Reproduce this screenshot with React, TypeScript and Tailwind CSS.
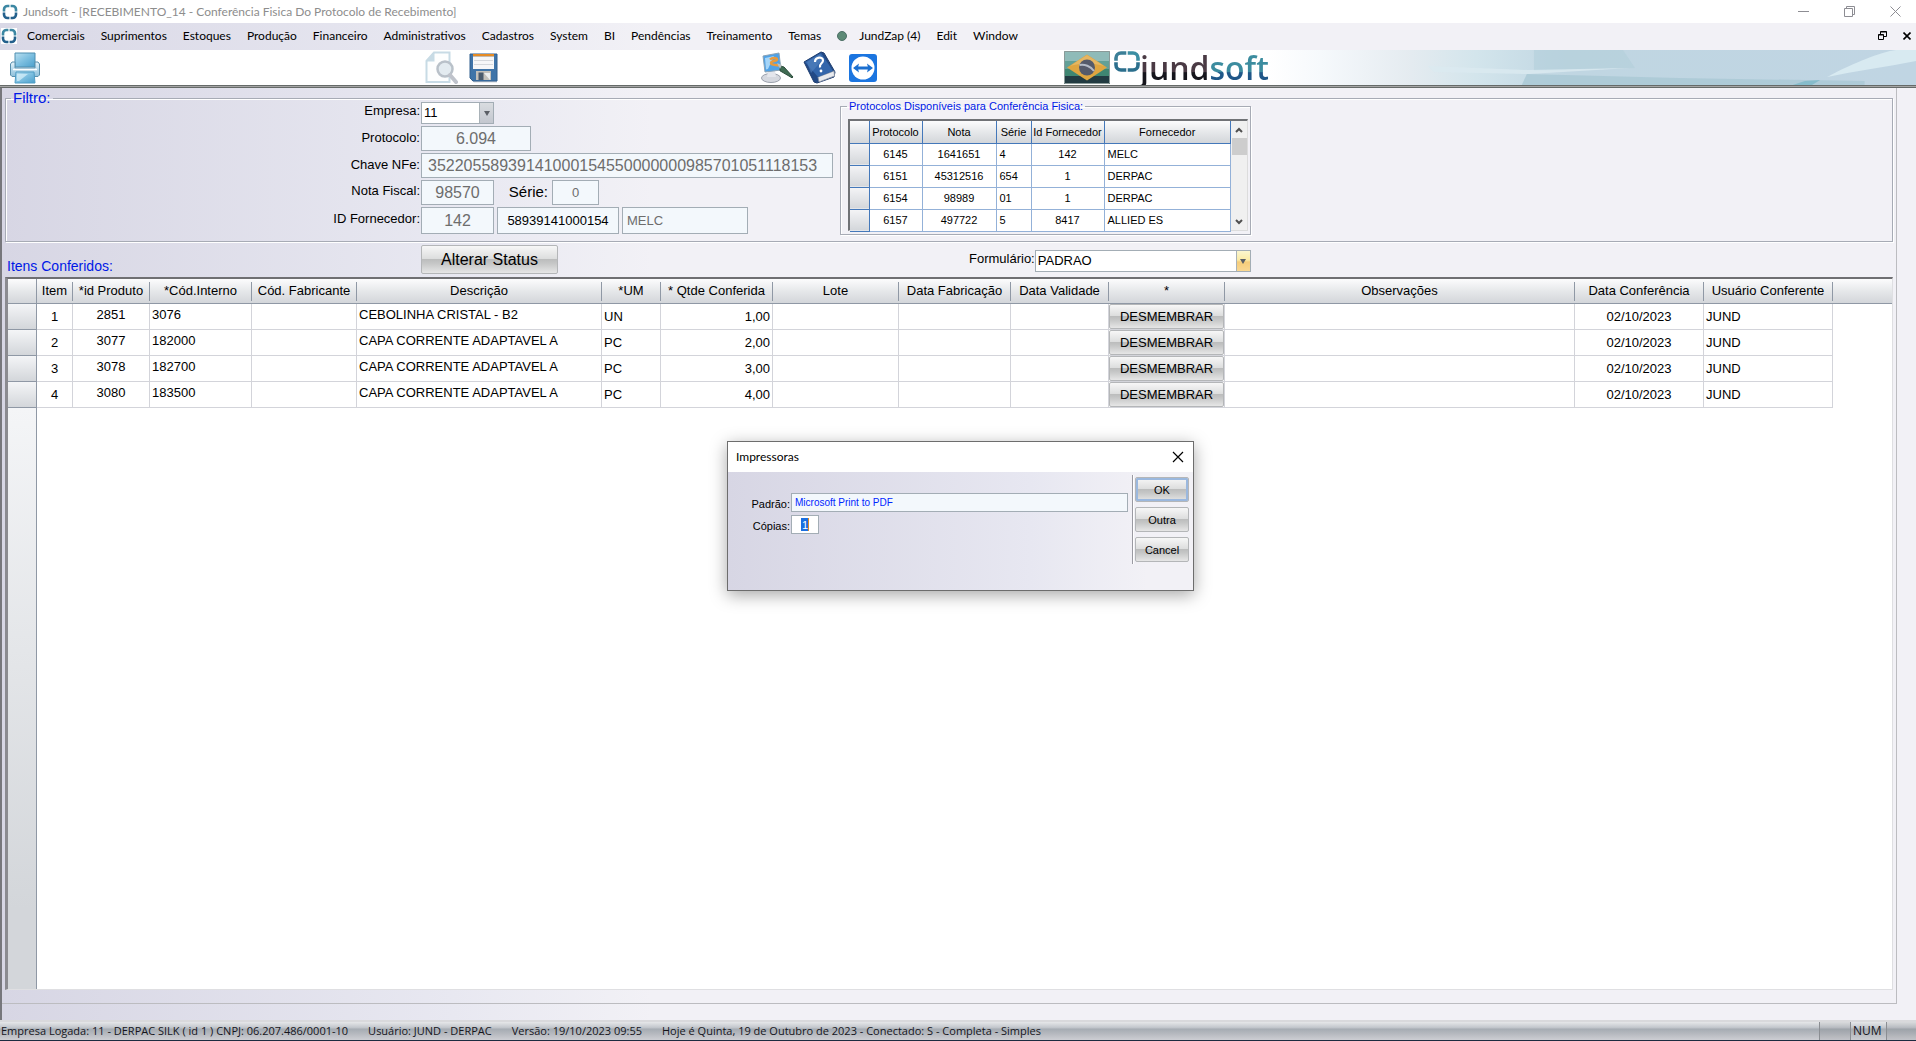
import { useState } from "react";

const menus = [
  "Comerciais",
  "Suprimentos",
  "Estoques",
  "Produção",
  "Financeiro",
  "Administrativos",
  "Cadastros",
  "System",
  "BI",
  "Pendências",
  "Treinamento",
  "Temas",
];

const protocolos = [
  ["6145", "1641651", "4", "142", "MELC"],
  ["6151", "45312516", "654", "1", "DERPAC"],
  ["6154", "98989", "01", "1", "DERPAC"],
  ["6157", "497722", "5", "8417", "ALLIED ES"],
];

const itens = [
  { item: 1, id: "2851", cod: "3076", desc: "CEBOLINHA CRISTAL - B2", um: "UN", qtde: "1,00" },
  { item: 2, id: "3077", cod: "182000", desc: "CAPA CORRENTE ADAPTAVEL A", um: "PC", qtde: "2,00" },
  { item: 3, id: "3078", cod: "182700", desc: "CAPA CORRENTE ADAPTAVEL A", um: "PC", qtde: "3,00" },
  { item: 4, id: "3080", cod: "183500", desc: "CAPA CORRENTE ADAPTAVEL A", um: "PC", qtde: "4,00" },
];

const colunas = [
  { nome: "Item", w: "w-[36px]" },
  { nome: "*id Produto", w: "w-[77px]" },
  { nome: "*Cód.Interno", w: "w-[102px]" },
  { nome: "Cód. Fabricante", w: "w-[105px]" },
  { nome: "Descrição", w: "w-[245px]" },
  { nome: "*UM", w: "w-[59px]" },
  { nome: "* Qtde Conferida", w: "w-[112px]" },
  { nome: "Lote", w: "w-[126px]" },
  { nome: "Data Fabricação", w: "w-[112px]" },
  { nome: "Data Validade", w: "w-[98px]" },
  { nome: "*", w: "w-[116px]" },
  { nome: "Observações", w: "w-[350px]" },
  { nome: "Data Conferência", w: "w-[129px]" },
  { nome: "Usuário Conferente", w: "w-[129px]" },
];

const chrome = "font-['Lato','Noto_Sans',sans-serif]";
const field = "border border-[#a3adb5] bg-[#f3f8fc] outline-none text-[#6d6d6d]";
const metal =
  "border border-[#b4b6b8] rounded-xs bg-[linear-gradient(to_bottom,#f7f7f7_0%,#dcdddd_48%,#bcbdbd_50%,#c6c7c7_65%,#e6e6e6_100%)] text-black";
const headerBg = "bg-[linear-gradient(to_bottom,#fcfcfd,#e6e8ea_50%,#d3d6da)]";
const cell = "border-r border-b border-[#d3d4da]";

const AppMark = () => (
  <svg width="16" height="16" viewBox="0 0 16 16" fill="none" strokeWidth="2.6">
    <path d="M2 7.400V5.500A3.500 3.500 0 0 1 5.500 2h1.900M8.600 2h1.900A3.500 3.500 0 0 1 14 5.500v1.900" stroke="#3c87a3" />
    <path d="M14 8.600v1.900a3.500 3.500 0 0 1-3.500 3.500H8.600M7.400 14H5.500A3.500 3.500 0 0 1 2 10.500V8.600" stroke="#23608c" />
  </svg>
);

const PrinterIcon = () => (
  <svg width="30" height="32" viewBox="0 0 30 32">
    <defs>
      <linearGradient id="paper" x1="0" y1="0" x2="1" y2="1">
        <stop offset="0" stopColor="#b9dff0" />
        <stop offset="0.5" stopColor="#7dbfe0" />
        <stop offset="1" stopColor="#4b9fcb" />
      </linearGradient>
      <linearGradient id="body" x1="0" y1="0" x2="0" y2="1">
        <stop offset="0" stopColor="#e8f4fa" />
        <stop offset="0.5" stopColor="#b5d9ec" />
        <stop offset="1" stopColor="#8fbfd9" />
      </linearGradient>
    </defs>
    <path d="M5 1h20v14H5z" fill="url(#paper)" stroke="#4f8eb0" />
    <path d="M2 10h3v6h20v-6h3l1.5 2v11l-1.500 1.500H2L.5 23V12z" fill="url(#body)" stroke="#5a90ad" />
    <path d="M3 17.500h24" stroke="#fff" strokeWidth="1.500" />
    <path d="M6 20h18l1 11H5z" fill="url(#paper)" stroke="#4f9cc4" />
    <path d="M7 22h11l-9 7H7z" fill="#d9f1fb" opacity=".7" />
  </svg>
);

const PreviewIcon = () => (
  <svg width="33" height="33" viewBox="0 0 33 33" fill="none">
    <path d="M9 1.500h15.500V31H1.500V10z" fill="#fdfefe" stroke="#c8dbe5" strokeWidth="2" />
    <path d="M1 10.500 9.500 1v9.500z" fill="#c8dbe5" />
    <circle cx="20" cy="18" r="7.500" fill="#e3ebf0" stroke="#b9c1c9" strokeWidth="2.500" />
    <path d="m25 24 6 7" stroke="#bfc3cb" strokeWidth="4" strokeLinecap="round" />
  </svg>
);

const SaveIcon = () => (
  <svg width="29" height="32" viewBox="0 0 29 32">
    <path d="M2 28h26v2.500H5z" fill="#d5d8dc" />
    <path d="M1 2h27v27H4l-3-3z" fill="#3f74a8" stroke="#315f8e" />
    <path d="M4 2h21v2.500H4z" fill="#e58b24" />
    <path d="M4 4.500h21V17H4z" fill="#f6f7f8" />
    <path d="M5 8.500h19M5 12.500h19" stroke="#d5d8dc" />
    <path d="M7 19h15v9H7z" fill="#c3c0ba" />
    <path d="M9.500 20.500h5V28h-5z" fill="#4a5a6c" />
    <path d="m15 21 6 0v7z" fill="#eceeef" />
  </svg>
);

const ThemeIcon = () => (
  <svg width="33" height="31" viewBox="0 0 33 31">
    <ellipse cx="10" cy="26" rx="9.500" ry="4.500" fill="#d5d8df" stroke="#9aa0ab" />
    <path d="M7 19h7l1 6H6z" fill="#e4e6ec" />
    <path d="m2 4 16-3 2 17-16 2z" fill="#4fa1e6" stroke="#8aa2b5" />
    <path d="m4 6 9-2-6 13-2 .5z" fill="#a5d5f8" />
    <path d="M9 7.500c2-2 7-2 7 0s-6 1-6 3.500 5 1.500 8 2.500" fill="none" stroke="#e99a3c" strokeWidth="2.400" />
    <path d="m19 14 4 1 9 10-1 .8-12-7z" fill="#3f6b52" stroke="#294a39" />
    <path d="m16 11 5 2-2 4z" fill="#b9c1c4" />
  </svg>
);

const HelpIcon = () => (
  <svg width="33" height="33" viewBox="0 0 33 33">
    <path d="m1 11 17-10 3 1 11 19-1 5-17 6-3-1z" fill="#234a86" stroke="#1d3d70" />
    <path d="m15 26 16-6 .5 5L16 31z" fill="#e8eaee" stroke="#8c94a3" strokeWidth=".8" />
    <path d="m2 11 16-9 12 18-15 6z" fill="#3366ab" />
    <path d="m4 11 13-8 3 5L8 22z" fill="#5583c0" opacity=".6" />
    <path d="M12 11c0-5 8-6 8-1.500 0 3-4 3-3 7" fill="none" stroke="#fff" strokeWidth="2.200" />
    <circle cx="18" cy="20" r="1.400" fill="#fff" />
  </svg>
);

const RemoteIcon = () => (
  <svg width="28" height="28" viewBox="0 0 28 28">
    <rect width="28" height="28" rx="3" fill="#1b75e0" />
    <circle cx="14" cy="14" r="11.500" fill="#fff" />
    <path d="m4 14 6-4.500-.8 3h9.600l-.8-3 6 4.500-6 4.500.8-3H9.200l.8 3z" fill="#1b6fd0" />
  </svg>
);

const FlagIcon = () => (
  <svg width="46" height="33" viewBox="0 0 46 33">
    <rect width="46" height="33" fill="#3f8672" />
    <path d="M0 0h46v10H0z" fill="#8fbbb8" />
    <path d="M0 10h46v8H0z" fill="#62a097" />
    <path d="M0 25h46v8H0z" fill="#223b42" />
    <path d="m3 16.500 20-13 20 13-20 13z" fill="#dfa540" />
    <path d="m6 15 17-11 17 11c-10-3-24-3-34 0z" fill="#e8bd70" opacity=".7" />
    <circle cx="23" cy="16.500" r="8" fill="#555a6a" />
    <path d="M15.500 14c5-1 11 1 14.500 6" fill="none" stroke="#b4bac6" strokeWidth="2" />
    <path d="M.5.5h45v32H.5z" fill="none" stroke="#8a9a98" />
  </svg>
);

const BrandMark = () => (
  <svg width="26" height="21" viewBox="0 0 26 21" fill="none" strokeWidth="3.600">
    <path d="M2 9.800V7A5 5 0 0 1 7 2h5.300" stroke="#3b7f97" />
    <path d="M13.700 2H19a5 5 0 0 1 5 5v2.800" stroke="#3b8fa3" />
    <path d="M24 11.200V14a5 5 0 0 1-5 5h-5.300M12.300 19H7a5 5 0 0 1-5-5v-2.800" stroke="#2b6f8d" />
  </svg>
);

const Banner = () => (
  <svg className="h-full flex-1" viewBox="0 0 640 35" preserveAspectRatio="none">
    <defs>
      <linearGradient id="sky">
        <stop offset="0" stopColor="#fff" />
        <stop offset="0.08" stopColor="#f6f9fc" />
        <stop offset="0.22" stopColor="#e4ebf0" />
        <stop offset="0.32" stopColor="#d3e5ec" />
        <stop offset="0.46" stopColor="#c0d6e2" />
        <stop offset="1" stopColor="#c0d5e3" />
      </linearGradient>
    </defs>
    <path d="M0 0h640v35H0z" fill="url(#sky)" />
    <path d="M262 0h88l12 18-100 3z" fill="#b3cfdb" opacity=".6" />
    <path d="M157 16l100 4 100-2-100 6-94-2z" fill="#dbeaf0" opacity=".8" />
    <path d="M255 24l150 4 184 3v4H250z" fill="#a9c8d4" opacity=".8" />
    <path d="M552 27C580 12 605 2 620 0h20v11c-30 6-60 10-88 16z" fill="#d8eaf1" />
    <path d="m518 35 12-4 15-1-8 5z" fill="#86bccb" />
  </svg>
);

const Spin = ({ gold }: { gold?: boolean }) => (
  <span
    className={
      gold
        ? "pointer-events-none absolute inset-y-px right-px w-[14px] flex items-center justify-center border-l border-[#a9b2b8] bg-[linear-gradient(to_bottom,#fbf6cf,#fbeba6_45%,#f6cd7a_55%,#fad892)]"
        : "pointer-events-none absolute inset-y-px right-px w-[14px] flex items-center justify-center border-l border-[#a9b2b8] bg-[linear-gradient(to_bottom,#d9dce0,#c3c7cf)]"
    }
  >
    <svg width="6" height="5" viewBox="0 0 6 5">
      <path d="M0 0h6L3 5z" fill="#5b5f66" />
    </svg>
  </span>
);

const Filtro = () => (
  <fieldset className="mx-[3px] min-w-0 border border-[#a7abb5] shadow-[inset_1px_1px_0_#fff,1px_1px_0_#fff]">
    <legend className="ml-[5px] px-[2px] h-2 leading-2 text-[15px] text-[#0019e6]">Filtro:</legend>
    <div className="flex items-start gap-[7px] pb-[6px]">
      <div className="grid grid-cols-[415px_auto] gap-y-[2px]">
        <label htmlFor="empresa" className="pr-px text-right">Empresa:</label>
        <div className="relative w-[73px]">
          <select id="empresa" className="block appearance-none w-full h-[22px] border border-[#a3adb5] bg-white pl-[2px] outline-none">
            <option>11</option>
          </select>
          <Spin />
        </div>

        <label htmlFor="protocolo" className="pt-[3px] pr-px text-right">Protocolo:</label>
        <input id="protocolo" readOnly defaultValue="6.094" className={`${field} w-[110px] h-[25px] text-center text-base`} />

        <label htmlFor="chave" className="pt-[3px] pr-px text-right">Chave NFe:</label>
        <input id="chave" readOnly defaultValue="35220558939141000154550000000985701051118153" className={`${field} w-[412px] h-[25px] px-[6px] text-base`} />

        <label htmlFor="nota" className="pt-[2px] pr-px text-right">Nota Fiscal:</label>
        <div className="flex">
          <input id="nota" readOnly defaultValue="98570" className={`${field} w-[73px] h-[25px] text-center text-base`} />
          <label htmlFor="serie" className="w-[58px] pr-[4px] pt-[3px] text-right text-[15px]">Série:</label>
          <input id="serie" readOnly defaultValue="0" className={`${field} w-[47px] h-[25px] text-center`} />
        </div>

        <label htmlFor="fornecedor" className="pt-[3px] pr-px text-right">ID Fornecedor:</label>
        <div className="flex gap-[3px]">
          <input id="fornecedor" readOnly defaultValue="142" className={`${field} w-[73px] h-[27px] text-center text-base`} />
          <input aria-label="CNPJ" readOnly defaultValue="58939141000154" className="border border-[#a3adb5] bg-[#f3f8fc] outline-none w-[122px] h-[27px] text-center text-black" />
          <input aria-label="Nome do fornecedor" readOnly defaultValue="MELC" className={`${field} w-[126px] h-[27px] px-1`} />
        </div>
      </div>

      {/* Protocolos */}
      <fieldset className="w-[411px] border border-[#a7abb5] shadow-[inset_1px_1px_0_#fff,1px_1px_0_#fff] text-[11px]">
        <legend className="ml-[6px] px-[2px] h-2 leading-2 text-[#0019e6]">
          Protocolos Disponíveis para Conferência Fisica:
        </legend>
        <div className="flex ml-[7px] mr-[2px] mt-[9px] mb-[3px] h-[112px] border-t-2 border-l-2 border-[#707276] border-r border-b border-r-[#dcdcdc] border-b-[#dcdcdc]">
          <table className="flex-1 table-fixed border-collapse bg-white">
            <thead>
              <tr className={`h-[22px] ${headerBg}`}>
                <th className="w-[19px] border-r border-b border-[#4478ba]" />
                <th className="w-[53px] border-r border-b border-[#4478ba] p-0 font-normal">Protocolo</th>
                <th className="w-[74px] border-r border-b border-[#4478ba] p-0 font-normal">Nota</th>
                <th className="w-[35px] border-r border-b border-[#4478ba] p-0 font-normal">Série</th>
                <th className="w-[73px] border-r border-b border-[#4478ba] p-0 font-normal whitespace-nowrap">Id Fornecedor</th>
                <th className="border-r border-b border-[#4478ba] p-0 font-normal">Fornecedor</th>
              </tr>
            </thead>
            <tbody>
              {protocolos.map(([p, nota, serie, id, nome]) => (
                <tr key={p} className="h-[22px]">
                  <td className="border-r border-b border-[#4478ba] bg-[linear-gradient(to_bottom,#f4f4f6,#d3d6da)]" />
                  <td className="border-r border-b border-[#93b1d8] text-center">{p}</td>
                  <td className="border-r border-b border-[#93b1d8] text-center">{nota}</td>
                  <td className="border-r border-b border-[#93b1d8] pl-[3px]">{serie}</td>
                  <td className="border-r border-b border-[#93b1d8] text-center">{id}</td>
                  <td className="border-r border-b border-[#93b1d8] pl-[3px]">{nome}</td>
                </tr>
              ))}
            </tbody>
          </table>
          <div className="w-[16px] flex flex-col items-center bg-[#f0f0f0]">
            <svg width="8" height="17" viewBox="0 0 8 17" fill="none" stroke="#505050" strokeWidth="2">
              <path d="m1 11 3-3 3 3" />
            </svg>
            <div className="w-[15px] h-[17px] bg-[#cdcdcd]" />
            <svg width="8" height="17" viewBox="0 0 8 17" fill="none" stroke="#505050" strokeWidth="2" className="mt-auto">
              <path d="m1 7 3 3 3-3" />
            </svg>
          </div>
        </div>
      </fieldset>
    </div>
  </fieldset>
);

const Itens = () => (
  <div className="flex-1 flex flex-col mx-[3px] border-t-2 border-l-[3px] border-r border-b border-t-[#6f6f72] border-l-[#8b8b90] border-r-[#dfdfe2] border-b-[#dfdfe2] bg-white">
    <table className="w-full table-fixed border-separate border-spacing-0">
      <thead>
        <tr className="h-[25px]">
          <th className={`w-[29px] border-r border-b border-[#8f98a5] ${headerBg}`} />
          {colunas.map((c) => (
            <th key={c.nome} className={`${c.w} border-b border-[#8f98a5] p-0 font-normal whitespace-nowrap ${headerBg}`}>
              <div className="h-[19px] leading-[18px] border-r border-[#8f98a5]">{c.nome}</div>
            </th>
          ))}
          <th className={`border-b border-[#8f98a5] ${headerBg}`} />
        </tr>
      </thead>
      <tbody>
        {itens.map((i) => (
          <tr key={i.item} className="h-[26px]">
            <td className="border-r border-b border-[#8f98a5] bg-[linear-gradient(to_bottom,#f4f5f7,#d3d6da)]" />
            <td className={`${cell} p-0 text-center`}>{i.item}</td>
            <td className={`${cell} p-0 pb-[3px] text-center`}>{i.id}</td>
            <td className={`${cell} p-0 pl-[2px] pb-[3px]`}>{i.cod}</td>
            <td className={cell} />
            <td className={`${cell} p-0 pl-[2px] pb-[3px]`}>{i.desc}</td>
            <td className={`${cell} p-0 pl-[2px]`}>{i.um}</td>
            <td className={`${cell} p-0 pr-[2px] text-right`}>{i.qtde}</td>
            <td className={cell} />
            <td className={cell} />
            <td className={cell} />
            <td className={`${cell} p-0`}>
              <button type="button" className={`${metal} block w-full h-[25px] pt-px`}>DESMEMBRAR</button>
            </td>
            <td className={cell} />
            <td className={`${cell} p-0 text-center`}>02/10/2023</td>
            <td className={`${cell} p-0 pl-[2px]`}>JUND</td>
            <td />
          </tr>
        ))}
      </tbody>
    </table>
    <div className="flex-1 w-[29px] border-r border-[#8f98a5] bg-[linear-gradient(to_bottom,#f4f5f7,#d3d6da_500px)]" />
  </div>
);

const Impressoras = () => {
  const [copias, setCopias] = useState("1");
  return (
    <div
      role="dialog"
      aria-label="Impressoras"
      className="absolute left-[727px] top-[441px] w-[467px] h-[150px] flex flex-col border border-[#6d6d6d] bg-white shadow-[0_4px_16px_rgba(0,0,0,0.35)] text-[11px]"
    >
      <div className={`h-[30px] flex items-center justify-between pl-2 pr-[9px] text-[12px] ${chrome}`}>
        <span>Impressoras</span>
        <button type="button" aria-label="Fechar">
          <svg width="12" height="12" viewBox="0 0 12 12" stroke="#000" strokeWidth="1.200">
            <path d="m1 1 10 10M11 1 1 11" />
          </svg>
        </button>
      </div>
      <div className="flex-1 flex bg-[linear-gradient(to_right,#d7d6e4,#e7e7f1_65%,#f2f1f6_90%)]">
        <div className="flex-1 pt-[21px] pr-[4px] flex flex-col gap-[2px]">
          <div className="flex">
            <label htmlFor="padrao" className="w-[63px] pr-[1px] pt-[2px] text-right">Padrão:</label>
            <input id="padrao" readOnly defaultValue="Microsoft Print to PDF" className="flex-1 min-w-0 h-[19px] border border-[#a3adb5] bg-[#f3f8fc] px-[3px] text-[10px] text-[#0026ff] outline-none" />
          </div>
          <div className="flex">
            <label htmlFor="copias" className="w-[63px] pr-[1px] pt-[2px] text-right">Cópias:</label>
            <div className="relative w-[28px] h-[19px] border border-[#a3adb5] bg-white flex items-center justify-center">
              <span className="absolute w-[8px] h-[13px] bg-[#1b6fe0] border-r border-[#d98a2b]" />
              <input id="copias" value={copias} onChange={(e) => setCopias(e.target.value)} className="relative w-full text-center text-white bg-transparent outline-none" />
            </div>
          </div>
        </div>
        <div className="mt-[3px] w-[61px] h-[89px] border-l border-[#9a9aa2] shadow-[inset_1px_0_0_#fff] pt-[2px] pl-[2px] flex flex-col gap-[5px]">
          <button type="button" className={`${metal} w-[54px] h-[25px] shadow-[inset_0_0_0_2px_#9bb8de]`}>OK</button>
          <button type="button" className={`${metal} w-[54px] h-[25px]`}>Outra</button>
          <button type="button" className={`${metal} w-[54px] h-[25px]`}>Cancel</button>
        </div>
      </div>
    </div>
  );
};

const App = () => {
  return (
    <div className="relative min-h-screen flex flex-col bg-white text-[13px] leading-[18px] text-black font-['Liberation_Sans',Arial,sans-serif]">
      {/* Title bar */}
      <header className={`h-[23px] flex items-center pl-[2px] pr-[15px] text-[12px] text-[#8d8d8d] ${chrome}`}>
        <AppMark />
        <h1 className="ml-[5px]">Jundsoft - [RECEBIMENTO_14 - Conferência Fisica Do Protocolo de Recebimento]</h1>
        <div className="ml-auto flex gap-[35px]">
          <button type="button" aria-label="Minimizar">
            <svg width="11" height="11" viewBox="0 0 11 11" stroke="#8d8d93"><path d="M0 5.500h11" /></svg>
          </button>
          <button type="button" aria-label="Restaurar">
            <svg width="11" height="11" viewBox="0 0 11 11" fill="none" stroke="#8d8d93"><path d="M.5 2.500h8v8h-8zM2.500 2.500v-2h8v8h-2" /></svg>
          </button>
          <button type="button" aria-label="Fechar janela">
            <svg width="11" height="11" viewBox="0 0 11 11" stroke="#8d8d93"><path d="m.5.5 10 10M10.500.5l-10 10" /></svg>
          </button>
        </div>
      </header>

      {/* Menu */}
      <nav className={`h-[27px] flex items-center pb-[2px] pl-[1px] pr-[5px] text-[12px] bg-[linear-gradient(to_right,#d9d8e6,#e8e8f1_450px,#f2f1f6_650px)] ${chrome}`}>
        <span className="bg-white"><AppMark /></span>
        <div className="ml-[10px] flex items-center gap-4">
          {menus.map((m) => (
            <a key={m} href="#">{m}</a>
          ))}
          <a href="#" className="flex items-center gap-3">
            <span className="w-[10px] h-[10px] rounded-full bg-[#5d8a76] border border-[#4d6f66]" />
            JundZap (4)
          </a>
          <a href="#">Edit</a>
          <a href="#">Window</a>
        </div>
        <div className="ml-auto flex gap-4">
          <button type="button" aria-label="Restaurar documento">
            <svg width="9" height="9" viewBox="0 0 9 9" fill="none" stroke="#000"><path d="M.5 3.500h5v5h-5zM.5 4h5M2.500 3V.5h6v5H6M2.500 1h6" /></svg>
          </button>
          <button type="button" aria-label="Fechar documento">
            <svg width="8" height="8" viewBox="0 0 8 8" stroke="#000" strokeWidth="1.600"><path d="m.5.5 7 7M7.500.5l-7 7" /></svg>
          </button>
        </div>
      </nav>

      {/* Toolbar */}
      <div className="h-[35px] flex items-center pl-[10px]">
        <button type="button" aria-label="Imprimir"><PrinterIcon /></button>
        <button type="button" aria-label="Visualizar" className="ml-[385px]"><PreviewIcon /></button>
        <button type="button" aria-label="Salvar" className="ml-[11px]"><SaveIcon /></button>
        <button type="button" aria-label="Temas" className="ml-[263px]"><ThemeIcon /></button>
        <button type="button" aria-label="Ajuda" className="ml-[9px]"><HelpIcon /></button>
        <button type="button" aria-label="Acesso remoto" className="ml-[13px]"><RemoteIcon /></button>
        <div className="ml-[187px] flex">
          <FlagIcon />
          <span className="ml-1"><BrandMark /></span>
          <span className="leading-[34px] text-[32px] font-semibold font-['Open_Sans',sans-serif]">
            <span className="bg-[linear-gradient(to_bottom,#4a3a44_60%,#15151c_62%)] bg-clip-text text-transparent">jund</span>
            <span className="bg-[linear-gradient(to_bottom,#3c8c9f_60%,#1f5788_62%)] bg-clip-text text-transparent">soft</span>
          </span>
        </div>
        <Banner />
      </div>
      <div className="h-[3px] border-y border-[#666b69] bg-[#a5a5a5]" />

      {/* Form */}
      <main className="flex-1 flex flex-col border-l-2 border-[#77777c] bg-[linear-gradient(to_right,#d7d6e4,#e8e8f1_450px,#f2f1f6_650px)]">
        <div className="flex-1 flex mr-[19px] border-r border-b border-[#bcbcc0]">
          <div className="flex-1 min-w-0 flex flex-col pt-[6px] pb-[13px]">
            <Filtro />
            <div className="flex h-[35px] pl-[5px]">
              <h2 className="w-[414px] pt-[15px] text-[14px] text-[#0019e6]">Itens Conferidos:</h2>
              <button type="button" className={`${metal} mt-[3px] w-[137px] h-[29px] text-base`}>Alterar Status</button>
              <div className="ml-[411px] mt-[8px] flex">
                <label htmlFor="formulario">Formulário:</label>
                <div className="relative h-[22px]">
                  <select id="formulario" className="block appearance-none w-[216px] h-[22px] border border-[#a3adb5] bg-white pl-[2px] outline-none">
                    <option>PADRAO</option>
                  </select>
                  <Spin gold />
                </div>
              </div>
            </div>
            <Itens />
          </div>
        </div>
        <div className="h-[16px]" />
      </main>

      {/* Status bar */}
      <footer className="h-[21px] flex items-center border-t-2 border-b border-t-[#d9d9dc] border-b-[#1d2b40] pl-[1px] text-[11px] text-[#15151c] bg-[linear-gradient(to_bottom,#e6e7e9,#c3c7cd_30%,#a6acb3_40%,#b6b9bf_65%,#cdced3)] font-['Open_Sans','Noto_Sans',sans-serif]">
        <span>Empresa Logada: 11 - DERPAC SILK ( id 1 ) CNPJ: 06.207.486/0001-10</span>
        <span className="ml-5">Usuário: JUND - DERPAC</span>
        <span className="ml-5">Versão: 19/10/2023 09:55</span>
        <span className="ml-5">Hoje é Quinta, 19 de Outubro de 2023 - Conectado: S - Completa - Simples</span>
        <span className="ml-auto w-[31px] h-full border-l border-[#8b8e93] bg-black/5" />
        <span className="w-[36px] h-full border-l border-[#8b8e93] pl-[2px] text-[12px]">NUM</span>
        <span className="w-[30px] h-full border-l border-[#8b8e93] bg-black/5" />
      </footer>

      <Impressoras />
    </div>
  );
};

export default App;
